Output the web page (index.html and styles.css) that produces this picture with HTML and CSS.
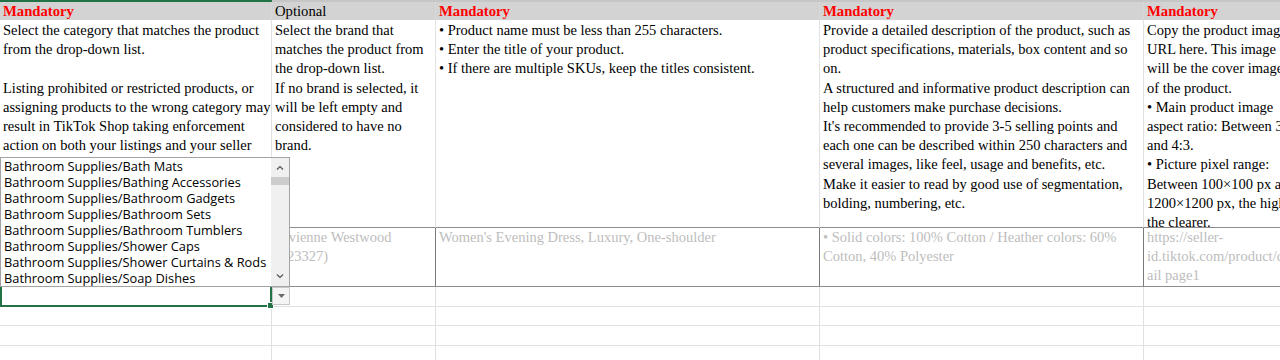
FILE: index.html
```html
<!DOCTYPE html>
<html lang="en">
<head>
<meta charset="utf-8">
<title>Product template sheet</title>
<link rel="stylesheet" href="styles.css">
</head>
<body>
<div class="viewport">
  <div class="topbar"><div class="topbar-sel"></div><div class="topbar-rest"></div></div>
  <div class="sheet">
    <!-- Row 1: header -->
    <div class="cell hdr mand">Mandatory</div>
    <div class="cell hdr opt">Optional</div>
    <div class="cell hdr mand">Mandatory</div>
    <div class="cell hdr mand">Mandatory</div>
    <div class="cell hdr mand">Mandatory</div>

    <!-- Row 2: descriptions -->
    <div class="cell desc">Select the category that matches the product<br>from the drop-down list.<br>&nbsp;<br>Listing prohibited or restricted products, or<br>assigning products to the wrong category may<br>result in TikTok Shop taking enforcement<br>action on both your listings and your seller</div>
    <div class="cell desc dk-b">Select the brand that<br>matches the product from<br>the drop-down list.<br>If no brand is selected, it<br>will be left empty and<br>considered to have no<br>brand.</div>
    <div class="cell desc dk-b">• Product name must be less than 255 characters.<br>• Enter the title of your product.<br>• If there are multiple SKUs, keep the titles consistent.</div>
    <div class="cell desc dk-b">Provide a detailed description of the product, such as<br>product specifications, materials, box content and so<br>on.<br>A structured and informative product description can<br>help customers make purchase decisions.<br>It's recommended to provide 3-5 selling points and<br>each one can be described within 250 characters and<br>several images, like feel, usage and benefits, etc.<br>Make it easier to read by good use of segmentation,<br>bolding, numbering, etc.</div>
    <div class="cell desc dk-b">Copy the product image<br>URL here. This image<br>will be the cover image<br>of the product.<br>• Main product image<br>aspect ratio: Between 3:4<br>and 4:3.<br>• Picture pixel range:<br>Between 100×100 px and<br>1200×1200 px, the higher<br>the clearer.</div>

    <!-- Row 3: examples -->
    <div class="cell ex"></div>
    <div class="cell ex dk">Vivienne Westwood<br>(123327)</div>
    <div class="cell ex dk">Women's Evening Dress, Luxury, One-shoulder</div>
    <div class="cell ex dk">• Solid colors: 100% Cotton / Heather colors: 60%<br>Cotton, 40% Polyester</div>
    <div class="cell ex dk">https://seller-<br>id.tiktok.com/product/det<br>ail page1</div>

    <!-- Empty rows -->
    <div class="cell"></div><div class="cell"></div><div class="cell"></div><div class="cell"></div><div class="cell"></div>
    <div class="cell"></div><div class="cell"></div><div class="cell"></div><div class="cell"></div><div class="cell"></div>
    <div class="cell"></div><div class="cell"></div><div class="cell"></div><div class="cell"></div><div class="cell"></div>
    <div class="cell"></div><div class="cell"></div><div class="cell"></div><div class="cell"></div><div class="cell"></div>
  </div>

  <div class="selection"><span class="fill-handle"></span></div>
  <div class="dd-button">
    <svg width="7" height="4" viewBox="0 0 7 4"><path d="M0 0H7L3.5 4Z" fill="#6b6b6b"/></svg>
  </div>

  <div class="dropdown">
    <ul class="dd-list">
      <li>Bathroom Supplies/Bath Mats</li>
      <li>Bathroom Supplies/Bathing Accessories</li>
      <li>Bathroom Supplies/Bathroom Gadgets</li>
      <li>Bathroom Supplies/Bathroom Sets</li>
      <li>Bathroom Supplies/Bathroom Tumblers</li>
      <li>Bathroom Supplies/Shower Caps</li>
      <li>Bathroom Supplies/Shower Curtains &amp; Rods</li>
      <li>Bathroom Supplies/Soap Dishes</li>
    </ul>
    <div class="dd-scroll">
      <div class="dd-arrow">
        <svg width="8" height="5" viewBox="0 0 8 5"><path d="M1 4.5L4 1.5L7 4.5" fill="none" stroke="#555" stroke-width="1.2"/></svg>
      </div>
      <div class="dd-thumb"></div>
      <div class="dd-track"></div>
      <div class="dd-arrow">
        <svg width="8" height="5" viewBox="0 0 8 5"><path d="M1 0.5L4 3.5L7 0.5" fill="none" stroke="#555" stroke-width="1.2"/></svg>
      </div>
    </div>
  </div>
</div>
</body>
</html>
```

FILE: styles.css
```css
html, body {
  margin: 0;
  padding: 0;
  background: #ffffff;
}

.viewport {
  position: relative;
  width: 1280px;
  height: 360px;
  overflow: hidden;
  font-family: "Liberation Serif", "Times New Roman", serif;
  font-size: 14.5px;
  color: #000;
}

.topbar {
  display: flex;
  height: 2px;
}
.topbar-sel {
  width: 272px;
  background: #217346;
}
.topbar-rest {
  flex: 1;
  background: #c6c6c6;
}

.sheet {
  display: grid;
  grid-template-columns: 272px 164px 384px 324px 300px;
  grid-template-rows: 19px 207px 59px 20px 19px 20px 20px;
  width: 1444px;
}

.cell {
  box-sizing: border-box;
  border-right: 1px solid #e1e1e1;
  border-bottom: 1px solid #e1e1e1;
  padding: 0 2px 0 3px;
  white-space: nowrap;
  overflow: hidden;
  line-height: 19.2px;
}

.hdr {
  background: #d3d3d3;
  border-right-color: #d8d8d8;
  border-bottom-color: #ffffff;
  line-height: 18px;
  font-size: 14.67px;
}
.mand {
  color: #ff0000;
  font-weight: bold;
}
.opt {
  color: #000;
}

.desc {
  padding-top: 0;
}
.dk-b {
  border-bottom-color: #8c8c8c;
}

.ex {
  color: #bdbdbd;
}
.dk {
  border-right-color: #7a7a7a;
  border-bottom-color: #8c8c8c;
}

.selection {
  position: absolute;
  left: 0;
  top: 285px;
  width: 272px;
  height: 22px;
  box-sizing: border-box;
  border: 2px solid #217346;
}
.fill-handle {
  position: absolute;
  right: -4px;
  bottom: -4px;
  width: 5px;
  height: 5px;
  background: #217346;
  border: 1px solid #fff;
}

.dd-button {
  position: absolute;
  left: 272px;
  top: 287px;
  width: 18px;
  height: 18px;
  box-sizing: border-box;
  border: 1px solid #c8c8c8;
  background: #f4f4f4;
  display: flex;
  align-items: center;
  justify-content: center;
}

.dropdown {
  position: absolute;
  left: 0;
  top: 157px;
  width: 290px;
  height: 130px;
  box-sizing: border-box;
  border: 1px solid #a3a3a3;
  background: #ffffff;
  display: flex;
  z-index: 2;
}
.dd-list {
  list-style: none;
  margin: 0;
  padding: 0 0 0 3px;
  flex: 1;
  overflow: hidden;
  font-family: "Open Sans", "Noto Sans", sans-serif;
  font-size: 12.8px;
  line-height: 16px;
  white-space: nowrap;
}
.dd-scroll {
  width: 18px;
  background: #f0f0f0;
  display: flex;
  flex-direction: column;
}
.dd-arrow {
  height: 19px;
  display: flex;
  align-items: center;
  justify-content: center;
}
.dd-thumb {
  height: 8px;
  background: #cdcdcd;
}
.dd-track {
  flex: 1;
}
```
